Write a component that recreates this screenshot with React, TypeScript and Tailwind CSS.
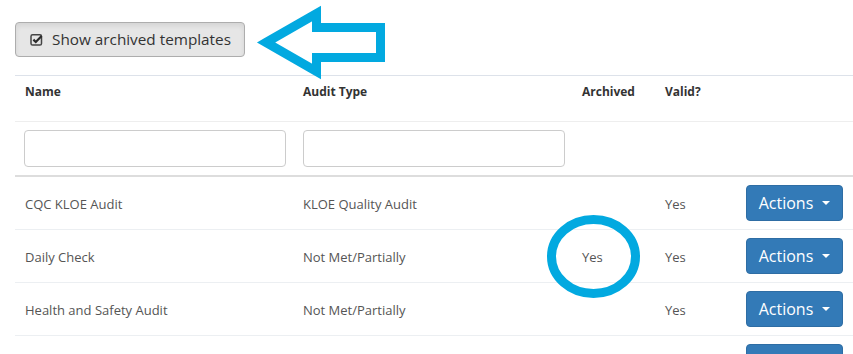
const ROWS = [
  { name: 'CQC KLOE Audit', type: 'KLOE Quality Audit', archived: '', valid: 'Yes' },
  { name: 'Daily Check', type: 'Not Met/Partially', archived: 'Yes', valid: 'Yes' },
  { name: 'Health and Safety Audit', type: 'Not Met/Partially', archived: '', valid: 'Yes' },
  { name: '', type: '', archived: '', valid: '' },
]

const COLS = 'grid grid-cols-[278px_279px_83px_81px_117px]'

function CheckSquare() {
  return (
    <svg width="14" height="13" viewBox="0 0 14 13" className="shrink-0">
      <rect x="1" y="1.8" width="10.5" height="10.2" rx="1.6" fill="none" stroke="#444" strokeWidth="1.5" />
      <path d="M3.4 6.6 L5.8 9 L11.6 3.1" fill="none" stroke="#2b2b2b" strokeWidth="2.2" />
    </svg>
  )
}

function ActionsButton({ label = true }: { label?: boolean }) {
  return (
    <button className="flex h-[36px] w-[97px] items-center justify-center gap-[9px] rounded-[4px] border border-[#2e6da4] bg-[#337ab7] text-[16px] text-white">
      {label && (
        <>
          <span>Actions</span>
          <span className="h-0 w-0 border-x-[4px] border-t-[4px] border-x-transparent border-t-white" />
        </>
      )}
    </button>
  )
}

export default function App() {
  return (
    <div className="relative h-[354px] w-[853px] overflow-hidden bg-white font-['Open_Sans',sans-serif]">
      <div className="px-[15px] pt-[22px]">
        <button className="flex h-[35px] w-[230px] items-center gap-[8px] rounded-[4px] border border-[#adadad] bg-[#e6e6e6] pl-[14px] text-[15.3px] text-[#333] shadow-[inset_0_3px_5px_rgba(0,0,0,0.08)]">
          <CheckSquare />
          <span>Show archived templates</span>
        </button>

        <div className="mt-[18px] w-[838px] border-t border-[#dde2ea]">
          {/* header */}
          <div className={`${COLS} h-[45px] pt-[7px] text-[12px] font-bold text-[#333]`}>
            <div className="px-[10px]">Name</div>
            <div className="px-[10px]">Audit Type</div>
            <div className="px-[10px]">Archived</div>
            <div className="px-[10px]">Valid?</div>
            <div />
          </div>

          {/* filters */}
          <div className={`${COLS} border-t border-[#eeeeee] py-[8px]`}>
            <div className="pl-[9px]">
              <input className="h-[37px] w-[262px] rounded-[4px] border border-[#cccccc] bg-white" />
            </div>
            <div className="pl-[10px]">
              <input className="h-[37px] w-[262px] rounded-[4px] border border-[#cccccc] bg-white" />
            </div>
            <div />
            <div />
            <div />
          </div>

          {/* body */}
          <div className="border-t-2 border-[#dddddd]">
            {ROWS.map((r, i) => (
              <div
                key={i}
                className={`${COLS} h-[53px] items-center border-b border-[#eceff2] text-[13px] text-[#555]`}
              >
                <div className="px-[10px] pt-[3px]">{r.name}</div>
                <div className="px-[10px] pt-[3px]">{r.type}</div>
                <div className="px-[10px] pt-[3px]">{r.archived}</div>
                <div className="px-[10px] pt-[3px]">{r.valid}</div>
                <div className="px-[10px]">
                  <ActionsButton label={i < 3} />
                </div>
              </div>
            ))}
          </div>
        </div>
      </div>

      {/* annotations */}
      <svg className="pointer-events-none absolute left-0 top-0" width="853" height="354">
        <polygon
          points="266,42.5 316.5,13.5 316.5,27.5 380.5,27.5 380.5,57.5 316.5,57.5 316.5,71.5"
          fill="none"
          stroke="#02a9e0"
          strokeWidth="9"
          strokeLinejoin="miter"
          strokeMiterlimit="10"
        />
        <ellipse cx="593.5" cy="256.5" rx="42" ry="37" fill="none" stroke="#02a9e0" strokeWidth="9" />
      </svg>
    </div>
  )
}
